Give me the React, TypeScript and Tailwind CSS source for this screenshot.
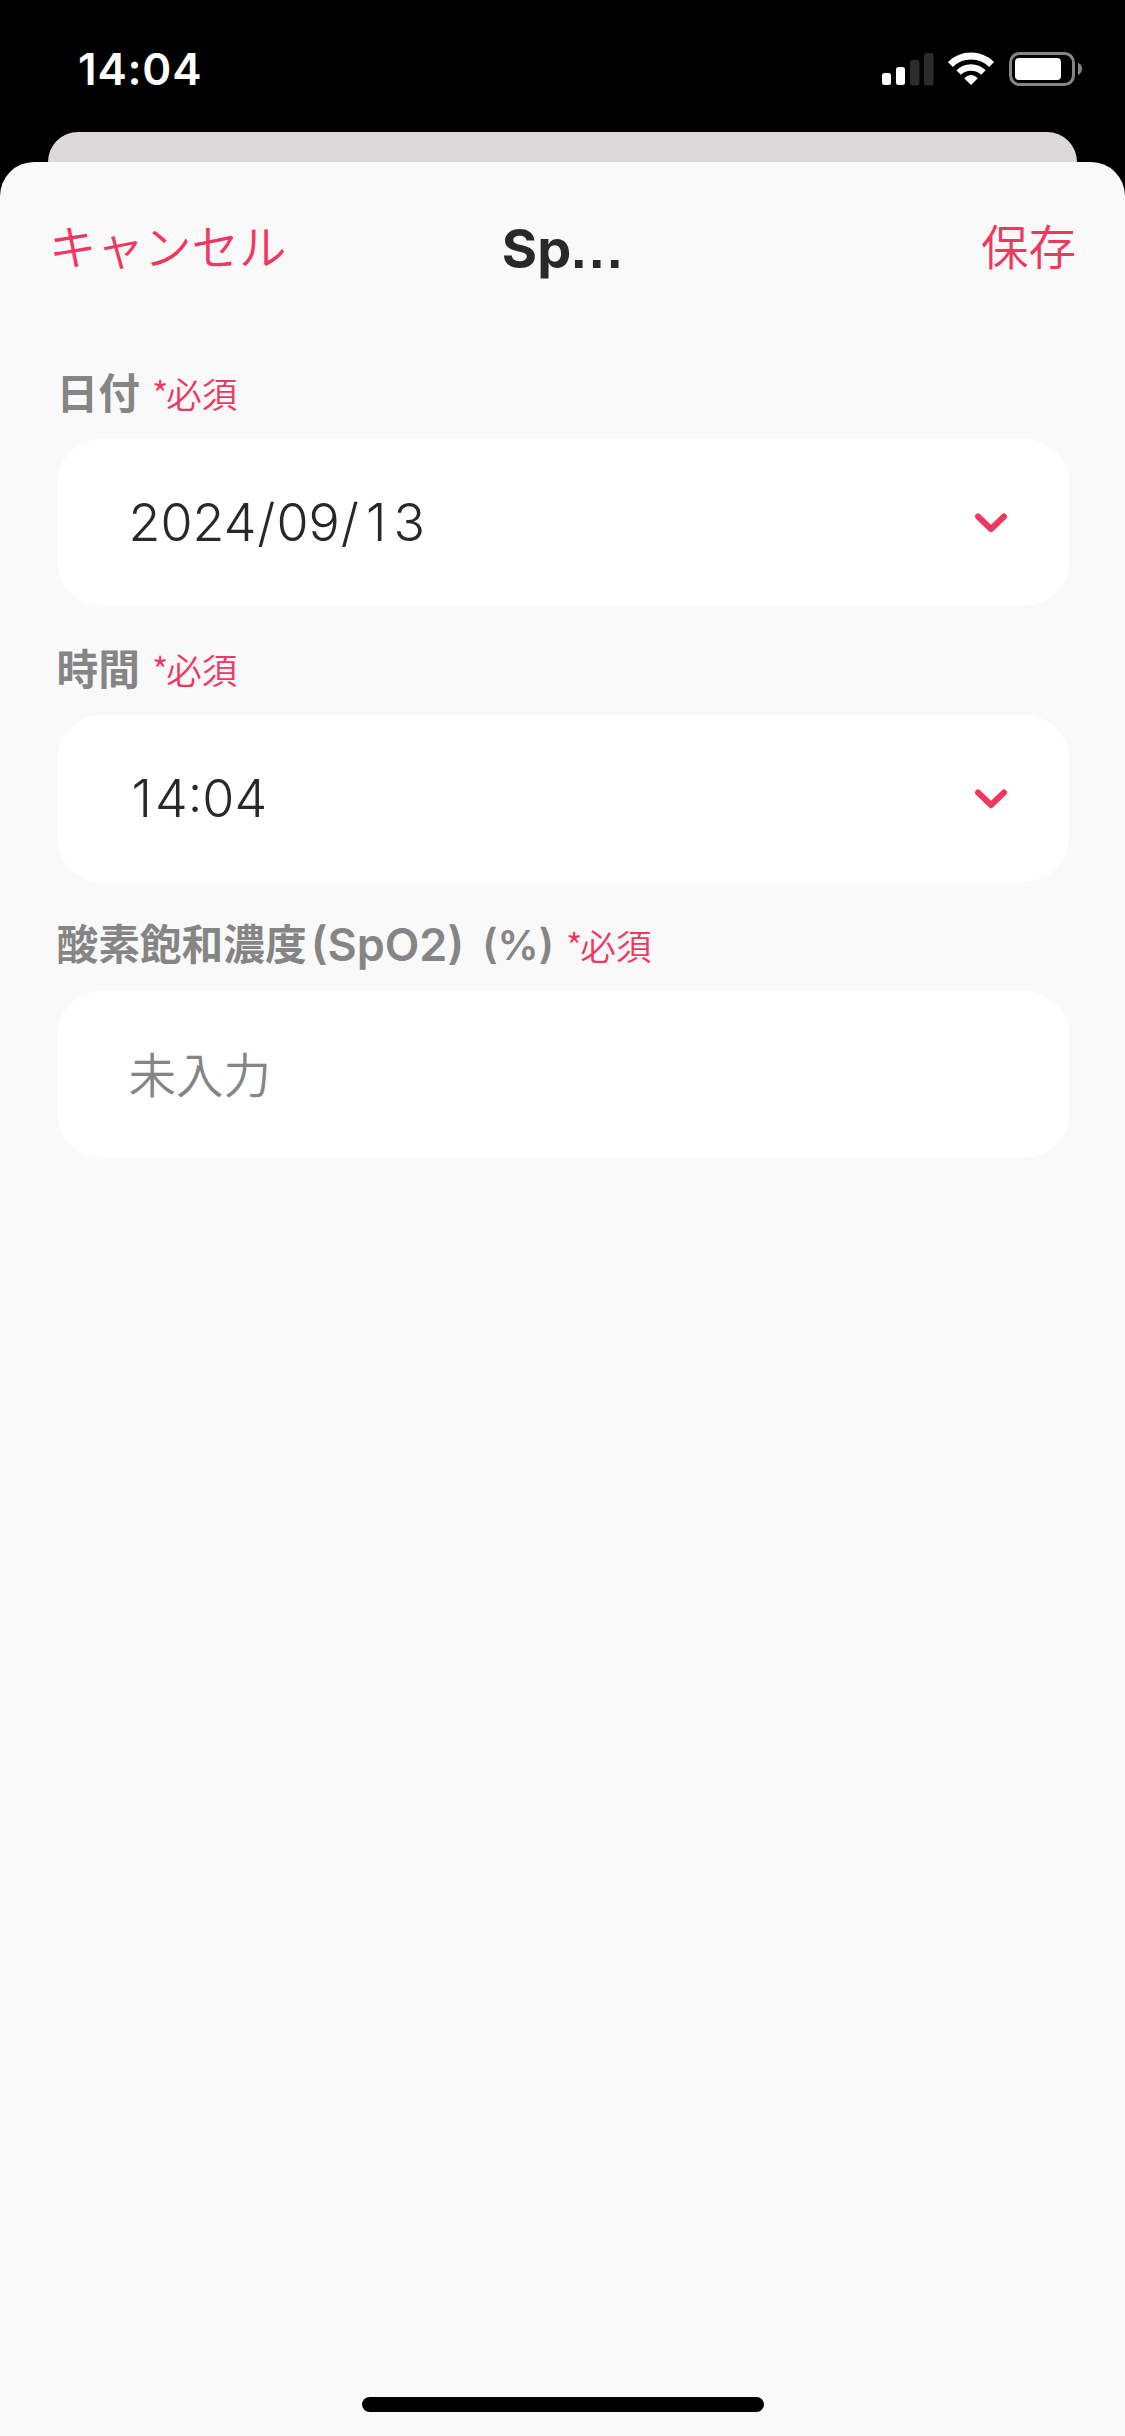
import React from "react";

const jp = "font-['Noto_Sans_CJK_JP',sans-serif]";
const latin = "font-['Inter','Noto_Sans_CJK_JP',sans-serif]";
const value = "font-['Inter',sans-serif] text-[52px] leading-[60px] font-[330] text-[#282828]";

function StatusIcons() {
  return (
    <svg className="h-[36px] w-[202px]" viewBox="881 51 202 36" fill="none">
      <rect x="882" y="73" width="9" height="12" rx="2.5" fill="#fff" />
      <rect x="896" y="67" width="9" height="18" rx="2.5" fill="#fff" />
      <rect x="910" y="60" width="9.5" height="25.5" rx="2.5" fill="#2b2b2b" />
      <rect x="924" y="53" width="9.5" height="32.5" rx="2.5" fill="#2b2b2b" />
      <path d="M971 85 L964.2 78.2 Q971 71.8 977.8 78.2 Z" fill="#fff" />
      <path d="M958.6 72.6 A17.6 17.6 0 0 1 983.4 72.6" stroke="#fff" strokeWidth="6.4" />
      <path d="M950.4 64.4 A29.2 29.2 0 0 1 991.6 64.4" stroke="#fff" strokeWidth="7" />
      <rect x="1010.5" y="53.5" width="63" height="31" rx="9" stroke="#858585" strokeWidth="3" />
      <rect x="1015" y="58" width="46" height="22" rx="4" fill="#fff" />
      <path d="M1078 62.5 Q1082 64.5 1082 68.8 Q1082 73 1078 75.2 Z" fill="#858585" />
    </svg>
  );
}

function Chevron() {
  return (
    <svg className="h-[20px] w-[34px]" viewBox="0 0 34 20" fill="none">
      <path d="M4 3.5 L17 16 L30 3.5" stroke="#f1375f" strokeWidth="6" strokeLinecap="round" strokeLinejoin="round" />
    </svg>
  );
}

function Field({ label, children, select }: { label: React.ReactNode; children: React.ReactNode; select?: boolean }) {
  return (
    <section className="h-[276px]">
      <div className="flex h-[76px] items-center pb-[20px] whitespace-nowrap">
        <span className={`${jp} flex text-[41.7px] leading-[60px] font-bold text-[#858585]`}>{label}</span>
        <span className={`${jp} ml-[12px] pt-[3px] text-[35.6px] leading-[60px] font-[350] text-[#f1375f]`}>
          <span className="mr-[-2px]">*</span>必須
        </span>
      </div>
      <div className="flex h-[167px] items-center justify-between rounded-[45px] bg-white pr-[61px] pl-[72px]">
        {children}
        {select && <Chevron />}
      </div>
    </section>
  );
}

export default function App() {
  return (
    <div className="flex h-[2436px] w-[1125px] flex-col overflow-hidden bg-black">
      <header className="flex h-[132px] shrink-0 items-start justify-between pt-[51px] pr-[42px] pl-[78px]">
        <span className={`${latin} text-[44px] leading-[36px] font-semibold tracking-[0.8px] text-white`}>14:04</span>
        <StatusIcons />
      </header>
      <div className="mx-[48px] h-[30px] shrink-0 rounded-t-[30px] bg-[#dbd9da]" />
      <main className="flex flex-1 flex-col rounded-t-[34px] bg-[#f9f9f9]">
        <nav className="grid h-[201px] grid-cols-3 items-center px-[49px] pb-[29px]">
          <button className={`${jp} pb-[6px] text-left text-[47.5px] leading-[70px] font-[350] text-[#f1375f]`}>
            キャンセル
          </button>
          <h1 className="pt-[2px] pl-[2px] text-center font-['Inter',sans-serif] text-[54px] leading-[70px] font-bold text-[#282828]">
            Sp<span className="font-['Liberation_Sans',sans-serif] tracking-[3px]">...</span>
          </h1>
          <button className={`${jp} pb-[6px] text-right text-[47.5px] leading-[70px] font-[350] text-[#f1375f]`}>
            保存
          </button>
        </nav>
        <div className="flex flex-1 flex-col px-[56.5px]">
          <Field label="日付" select>
            <span className={value}>
              2024<span className="mx-[1px]">/</span>09<span className="mx-[1px]">/</span>
              <span className="mr-[7px] ml-[6px]">1</span>3
            </span>
          </Field>
          <Field label="時間" select>
            <span className={value}>
              <span className="mr-[3px] ml-[3px]">1</span>4:04
            </span>
          </Field>
          <Field
            label={
              <>
                酸素飽和濃度
                <span className="ml-[4px] pt-[3px] font-['Inter',sans-serif] text-[45px] font-semibold">(SpO2)</span>
                <span className="ml-[18px] pt-[3px] font-['Inter',sans-serif] text-[41px] font-semibold">(%)</span>
              </>
            }
          >
            <span className={`${jp} pb-[3px] text-[47.5px] leading-[60px] font-[350] text-[#858585]`}>未入力</span>
          </Field>
        </div>
        <div className="mx-auto mb-[24px] h-[15px] w-[402px] rounded-full bg-black" />
      </main>
    </div>
  );
}
